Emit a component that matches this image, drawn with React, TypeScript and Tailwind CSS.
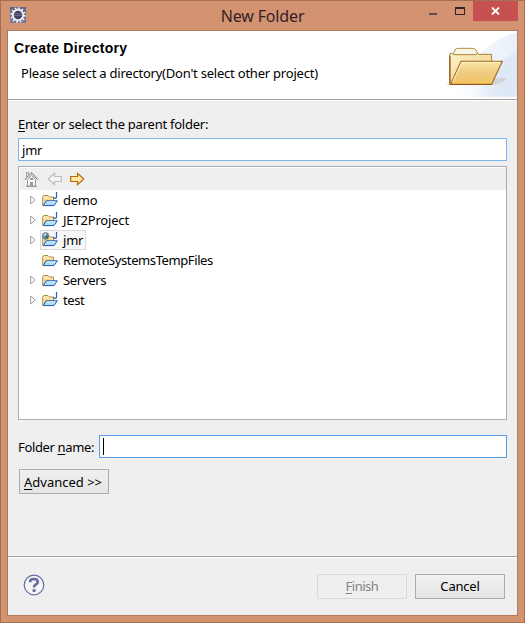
import type { ReactNode } from "react";

function EclipseIcon() {
  return (
    <svg className="h-4 w-4" viewBox="0 0 16 16">
      <rect width="16" height="16" fill="#62658b" />
      <rect y="11" width="16" height="5" fill="#777a9c" />
      <circle cx="8" cy="8" r="6.8" fill="none" stroke="#f0efec" strokeWidth="1.8" strokeDasharray="1.8 1.76" />
      <circle cx="8" cy="8" r="5.2" fill="#43405f" stroke="#f3f1ee" strokeWidth="1.9" />
      <path d="M4.5 6.8h7M4.3 8.6h7.4" stroke="#77769c" strokeWidth="0.9" />
    </svg>
  );
}

function BannerArt() {
  return (
    <svg className="h-[66px] w-[77px]" viewBox="0 0 231 198">
      <defs>
        <linearGradient id="glow" x1="0" y1="0.6" x2="1" y2="0.5">
          <stop offset="0" stopColor="#ffffff" />
          <stop offset="0.55" stopColor="#eef3fb" />
          <stop offset="1" stopColor="#e4ecf8" />
        </linearGradient>
        <linearGradient id="haze" x1="0" y1="0" x2="1" y2="0">
          <stop offset="0" stopColor="#dce6f5" stopOpacity="0" />
          <stop offset="0.6" stopColor="#dce6f5" />
        </linearGradient>
        <linearGradient id="back" x1="0" y1="0" x2="1" y2="1">
          <stop offset="0" stopColor="#fdf3cd" />
          <stop offset="1" stopColor="#eec978" />
        </linearGradient>
        <linearGradient id="front" x1="0" y1="0" x2="0" y2="1">
          <stop offset="0" stopColor="#fae5a7" />
          <stop offset="0.5" stopColor="#eecb80" />
          <stop offset="1" stopColor="#f3c45f" />
        </linearGradient>
      </defs>
      <path d="M231 3C160 22 115 72 72 120L28 198H231Z" fill="url(#glow)" opacity="0.8" />
      <path d="M231 62C190 78 150 120 100 198H231Z" fill="url(#haze)" opacity="0.85" />
      <path d="M14 163L35 155L190 140L200 146L165 162Z" fill="#b8aea0" opacity="0.35" />
      <path d="M40 68L45 57Q48 52 55 52H98Q105 52 108 57L113 68V85H40Z" fill="#f8f6e6" stroke="#b08f3c" strokeWidth="3" />
      <path d="M29 160V70Q29 67 33 67H37L41 71H108L113 67L117 70H155V160Z" fill="url(#back)" stroke="#a98030" strokeWidth="3" />
      <path d="M30 74V158" stroke="#9c642a" strokeWidth="4" />
      <path d="M32 160L63 91H187L155 160Z" fill="url(#front)" stroke="#a37225" strokeWidth="3.5" />
      <path d="M38 153L66 94H180" fill="none" stroke="#fff6cf" strokeWidth="3" />
      <path d="M31 160.5H154" stroke="#934f18" strokeWidth="2.5" />
    </svg>
  );
}

function HomeIcon() {
  return (
    <svg className="h-4 w-[15px]" viewBox="0 0 15 16" fill="none" stroke="#999999">
      <path d="M3.5 15V8.5L7.5 4.5l4 4V15Z" fill="#f8f8f8" />
      <path d="M1 8.5L7.5 2L14 8.5" strokeWidth="1.8" strokeDasharray="1.2 .4" />
      <path d="M2.5 6V1.5h2V4" />
      <rect x="6" y="7" width="3" height="2" fill="#999" stroke="none" />
      <rect x="6" y="11" width="3" height="4" fill="#999" stroke="none" />
      <path d="M2 15.5h11" />
    </svg>
  );
}

function ArrowIcon({ back = false }: { back?: boolean }) {
  return (
    <svg className={back ? "h-[14px] w-[15px] -scale-x-100" : "h-[14px] w-[15px]"} viewBox="0 0 15 14">
      <path
        d="M.7 4.5H7.5V1.3L13.8 7L7.5 12.7V9.5H.7Z"
        fill={back ? "#f5f5f5" : "#ffe9a0"}
        stroke={back ? "#bcbcbc" : "#b86a12"}
        strokeWidth="1.2"
      />
    </svg>
  );
}

type Kind = "java" | "web" | "plain";

function ProjectIcon({ kind }: { kind: Kind }) {
  return (
    <svg className="h-4 w-4" viewBox="0 0 16 16">
      <path d="M.7 13.5V4.6L2 3.5H6L7.3 5H11.5V9" fill="#fbe7ae" stroke="#ad8b52" />
      <path d="M2 7H10V9H4L2 12Z" fill="#f5d48c" />
      <path d="M1.2 13.6L4.2 8.8H15.3L12 13.6Z" fill="#a9dbfb" stroke="#2458ad" strokeLinejoin="round" />
      <path d="M5 10H13.5" stroke="#e2f6ff" />
      {kind !== "plain" && <path d="M11.2 5.2Q14.5 7.8 14.5 4.5V0" fill="none" stroke="#2d62af" strokeWidth="1.2" />}
      {kind === "web" && (
        <>
          <circle cx="3.6" cy="4" r="3.4" fill="#5f8da8" stroke="#7d8480" strokeWidth=".7" />
          <path d="M1.2 3.8Q1.8 1.3 4.4 1.3L3.6 3.4Z" fill="#e4f1ee" />
          <path d="M3.6 4.2L6.4 3.3L5.8 5.8L4 6.8Z" fill="#3c6a54" />
        </>
      )}
    </svg>
  );
}

function TreeRow({ name, kind, expandable = true, selected = false, spacing = "tracking-[-0.1px]" }: {
  name: string; kind: Kind; expandable?: boolean; selected?: boolean; spacing?: string;
}) {
  return (
    <div className="flex h-5 items-center pl-[11px]">
      <svg className="h-[10px] w-[6px]" viewBox="0 0 6 10">
        {expandable && <path d="M.7 1L5.2 5L.7 9Z" fill="#fff" stroke="#a0a0a0" />}
      </svg>
      <div className={`ml-1 flex h-5 items-center border pl-[1px] pr-[2px] ${selected ? "border-[#dadada] bg-[#f7f7f7]" : "border-transparent"}`}>
        <ProjectIcon kind={kind} />
        <span className={`-mt-px ml-[5px] whitespace-nowrap ${spacing}`}>{name}</span>
      </div>
    </div>
  );
}

function Button({ children, disabled = false, className = "" }: { children: ReactNode; disabled?: boolean; className?: string }) {
  return (
    <button
      disabled={disabled}
      className={`h-[25px] w-[90px] whitespace-nowrap border ${disabled ? "border-[#d9d9d9] bg-[#efefef] text-[#838383]" : "border-[#acacac] bg-linear-to-b from-[#f0f0f0] to-[#e5e5e5]"} ${className}`}
    >
      {children}
    </button>
  );
}

function Key({ children }: { children: ReactNode }) {
  return <span className="underline decoration-1 underline-offset-2">{children}</span>;
}

export default function App() {
  return (
    <div className="flex h-[623px] w-[525px] flex-col border border-[#a66f54] bg-[#d39370] font-['Noto_Sans','Open_Sans',sans-serif] text-[13px] leading-5 text-black">
      <header className="grid h-[29px] grid-cols-[1fr_auto_1fr] items-start">
        <div className="pl-[9px] pt-[6px]"><EclipseIcon /></div>
        <h1 className="pt-[4px] text-[16px] leading-[22px] tracking-[-0.15px] text-[#33202a]">New Folder</h1>
        <div className="flex justify-end pr-[6px]">
          <div className="mr-[18px] mt-[12px] h-[2px] w-2 bg-[#5e4b57]" />
          <div className="mr-[8px] mt-[6px] h-[8px] w-[10px] border border-t-2 border-[#33202a]" />
          <div className="flex h-5 w-[45px] items-center justify-center bg-[#c75050]">
            <svg className="h-2 w-[9px]" viewBox="0 0 9 8"><path d="M1 .5L8 7.5M8 .5L1 7.5" stroke="#fff" strokeWidth="1.8" /></svg>
          </div>
        </div>
      </header>
      <main className="mx-[6px] flex h-[586px] flex-col border border-[#b07a5c] bg-[#efefef]">
        <section className="flex h-[69px] justify-between border-b border-[#a0a0a0] bg-white">
          <div className="pl-[6px] pt-[7px]">
            <h2 className="font-['Liberation_Sans',sans-serif] text-[14px] font-bold leading-5 tracking-[0.27px]">Create Directory</h2>
            <p className="ml-[7px] mt-[5px] whitespace-nowrap tracking-[-0.22px]">Please select a directory(Don't select other project)</p>
          </div>
          <BannerArt />
        </section>
        <section className="flex h-[457px] flex-col border-b border-t border-b-[#a0a0a0] border-t-white px-[10px]">
          <label className="mt-[13px] whitespace-nowrap tracking-[-0.24px]"><Key>E</Key>nter or select the parent folder:</label>
          <div className="mt-[4px] flex h-[23px] w-[489px] items-center border border-[#7eb4ea] bg-white pl-[3px] tracking-[-0.2px]">jmr</div>
          <div className="mt-[5px] h-[254px] w-[489px] border border-[#abadb3] bg-white">
            <div className="ml-px mt-px flex h-[22px] items-center bg-[#efefef] pl-[4px]">
              <HomeIcon />
              <span className="ml-[8px]"><ArrowIcon back /></span>
              <span className="ml-[8px]"><ArrowIcon /></span>
            </div>
            <TreeRow name="demo" kind="java" spacing="tracking-[-0.25px]" />
            <TreeRow name="JET2Project" kind="java" spacing="tracking-[-0.18px]" />
            <TreeRow name="jmr" kind="web" selected spacing="tracking-[-0.2px]" />
            <TreeRow name="RemoteSystemsTempFiles" kind="plain" expandable={false} spacing="tracking-[-0.4px]" />
            <TreeRow name="Servers" kind="plain" spacing="tracking-[-0.3px]" />
            <TreeRow name="test" kind="java" spacing="tracking-[-0.4px]" />
          </div>
          <div className="mt-[15px] flex h-[23px] w-[489px] items-center">
            <label className="w-[81px] whitespace-nowrap tracking-[-0.35px]">Folder <Key>n</Key>ame:</label>
            <div className="flex h-[23px] flex-1 items-center border border-[#569de5] bg-white pl-[3px]">
              <div className="h-[17px] w-px bg-black" />
            </div>
          </div>
          <Button className="ml-px mt-[11px] pr-[2px]"><Key>A</Key>dvanced &gt;&gt;</Button>
        </section>
        <footer className="flex flex-1 items-center border-t border-white pb-px pr-[12px]">
          <svg className="-mt-[2px] ml-[15px] h-[22px] w-[22px]" viewBox="0 0 22 22">
            <circle cx="11" cy="11" r="9.8" fill="#f5f5f7" stroke="#646d9b" strokeWidth="1.2" />
            <path d="M7 8.2Q7 5 10.8 5Q14.8 5 14.8 8Q14.8 9.8 12.5 10.8Q11 11.5 11 13.6" fill="none" stroke="#666c9d" strokeWidth="2.6" />
            <rect x="9.6" y="15.2" width="3" height="2.7" fill="#666c9d" />
          </svg>
          <Button disabled className="ml-auto mr-2 tracking-[-0.5px]"><Key>F</Key>inish</Button>
          <Button className="tracking-[-0.2px]">Cancel</Button>
        </footer>
      </main>
    </div>
  );
}
